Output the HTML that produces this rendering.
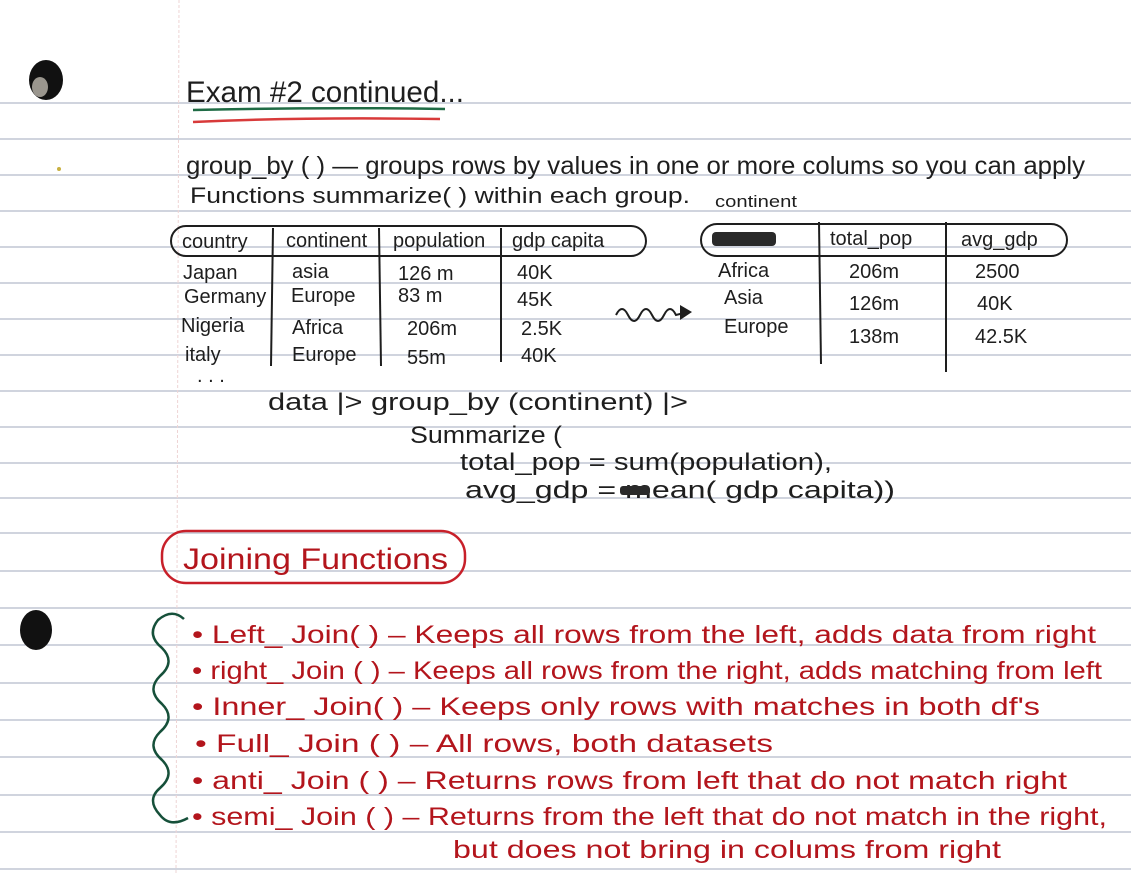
<!DOCTYPE html>
<html><head><meta charset="utf-8"><style>
html,body{margin:0;padding:0;background:#fff;}
svg{display:block}
text{font-family:"Liberation Sans",sans-serif;}
.k{fill:#1e1e1e}
.r{fill:#b3151c}
</style></head><body>
<svg width="1131" height="873" viewBox="0 0 1131 873" xmlns="http://www.w3.org/2000/svg">
<rect width="1131" height="873" fill="#fff"/>
<g stroke="#b4bbc9" stroke-width="1.2">
<line x1="0" y1="103" x2="1131" y2="103"/>
<line x1="0" y1="139" x2="1131" y2="139"/>
<line x1="0" y1="175" x2="1131" y2="175"/>
<line x1="0" y1="211" x2="1131" y2="211"/>
<line x1="0" y1="247" x2="1131" y2="247"/>
<line x1="0" y1="283" x2="1131" y2="283"/>
<line x1="0" y1="319" x2="1131" y2="319"/>
<line x1="0" y1="355" x2="1131" y2="355"/>
<line x1="0" y1="391" x2="1131" y2="391"/>
<line x1="0" y1="427" x2="1131" y2="427"/>
<line x1="0" y1="463" x2="1131" y2="463"/>
<line x1="0" y1="498" x2="1131" y2="498"/>
<line x1="0" y1="533" x2="1131" y2="533"/>
<line x1="0" y1="571" x2="1131" y2="571"/>
<line x1="0" y1="608" x2="1131" y2="608"/>
<line x1="0" y1="645" x2="1131" y2="645"/>
<line x1="0" y1="683" x2="1131" y2="683"/>
<line x1="0" y1="720" x2="1131" y2="720"/>
<line x1="0" y1="757" x2="1131" y2="757"/>
<line x1="0" y1="795" x2="1131" y2="795"/>
<line x1="0" y1="832" x2="1131" y2="832"/>
<line x1="0" y1="869" x2="1131" y2="869"/>
</g>
<line x1="179" y1="0" x2="176" y2="873" stroke="#eed4d4" stroke-width="1" stroke-dasharray="3 2"/>
<ellipse cx="46" cy="80" rx="17" ry="20" fill="#111"/>
<ellipse cx="40" cy="87" rx="8" ry="10" fill="#9a968e"/>
<ellipse cx="36" cy="630" rx="16" ry="20" fill="#111"/>
<circle cx="59" cy="169" r="2" fill="#c8b040"/>

<g lengthAdjust="spacingAndGlyphs">
<text class="k" x="186" y="102" font-size="30" textLength="278" lengthAdjust="spacingAndGlyphs">Exam #2 continued...</text>
<text class="k" x="186" y="174" font-size="25" textLength="899" lengthAdjust="spacingAndGlyphs">group_by ( ) — groups rows by values in one or more colums so you can apply</text>
<text class="k" x="190" y="203" font-size="22" textLength="500" lengthAdjust="spacingAndGlyphs">Functions summarize( ) within each group.</text>
<text class="k" x="715" y="207" font-size="17" textLength="82" lengthAdjust="spacingAndGlyphs">continent</text>
<text class="k" x="268" y="410" font-size="24" textLength="420" lengthAdjust="spacingAndGlyphs">data |&gt; group_by (continent) |&gt;</text>
<text class="k" x="410" y="443" font-size="24" textLength="152" lengthAdjust="spacingAndGlyphs">Summarize (</text>
<text class="k" x="460" y="470" font-size="24" textLength="372" lengthAdjust="spacingAndGlyphs">total_pop = sum(population),</text>
<text class="k" x="465" y="498" font-size="24" textLength="430" lengthAdjust="spacingAndGlyphs">avg_gdp = mean(     gdp capita))</text>
</g>
<path d="M193 110 Q320 107 445 109" stroke="#1f6b45" stroke-width="2.5" fill="none"/>
<path d="M193 122 Q300 117 440 119" stroke="#d83a3a" stroke-width="2.5" fill="none"/>

<g stroke="#1e1e1e" stroke-width="2" fill="none">
<rect x="171" y="226" width="475" height="30" rx="15"/>
<line x1="273" y1="228" x2="271" y2="366"/>
<line x1="379" y1="228" x2="381" y2="366"/>
<line x1="501" y1="228" x2="501" y2="362"/>
<rect x="701" y="224" width="366" height="32" rx="16"/>
<line x1="819" y1="222" x2="821" y2="364"/>
<line x1="946" y1="222" x2="946" y2="372"/>
<path d="M616 315 q6 -12 12 0 q6 12 12 0 q6 -12 12 0 q6 12 12 0 q6 -12 12 0 l8 -2"/>
</g>
<path d="M680 305 L692 312 L680 320 Z" fill="#1e1e1e"/>
<rect x="712" y="232" width="64" height="14" rx="4" fill="#2a2a2a"/>
<rect x="620" y="486" width="30" height="9" rx="3" fill="#2a2a2a"/>

<g class="k" font-size="20">
<text x="182" y="248">country</text>
<text x="286" y="247">continent</text>
<text x="393" y="247">population</text>
<text x="512" y="247">gdp capita</text>
<text x="830" y="245">total_pop</text>
<text x="961" y="246">avg_gdp</text>
<text x="183" y="279">Japan</text>
<text x="292" y="278">asia</text>
<text x="398" y="280">126 m</text>
<text x="517" y="279">40K</text>
<text x="184" y="303">Germany</text>
<text x="291" y="302">Europe</text>
<text x="398" y="302">83 m</text>
<text x="517" y="306">45K</text>
<text x="181" y="332">Nigeria</text>
<text x="292" y="334">Africa</text>
<text x="407" y="335">206m</text>
<text x="521" y="335">2.5K</text>
<text x="185" y="361">italy</text>
<text x="292" y="361">Europe</text>
<text x="407" y="364">55m</text>
<text x="521" y="362">40K</text>
<text x="197" y="382">. . .</text>
<text x="718" y="277">Africa</text>
<text x="724" y="304">Asia</text>
<text x="724" y="333">Europe</text>
<text x="849" y="278">206m</text>
<text x="849" y="310">126m</text>
<text x="849" y="343">138m</text>
<text x="975" y="278">2500</text>
<text x="977" y="310">40K</text>
<text x="975" y="343">42.5K</text>
</g>

<rect x="162" y="531" width="303" height="52" rx="24" fill="none" stroke="#c8202a" stroke-width="2.5"/>
<text class="r" x="183" y="569" font-size="30" textLength="265" lengthAdjust="spacingAndGlyphs">Joining Functions</text>

<path d="M184 619 Q172 608 158 620 Q146 635 162 648 Q176 662 160 676 Q146 690 162 704 Q176 718 160 732 Q146 746 162 760 Q176 774 160 788 Q146 800 160 815 Q170 828 188 818" stroke="#16503a" stroke-width="2.5" fill="none"/>

<g class="r" font-size="25">
<text x="192" y="643" textLength="904" lengthAdjust="spacingAndGlyphs">• Left_ Join( ) – Keeps all rows from the left, adds data from right</text>
<text x="192" y="679" textLength="910" lengthAdjust="spacingAndGlyphs">• right_ Join ( ) – Keeps all rows from the right, adds matching from left</text>
<text x="192" y="715" textLength="848" lengthAdjust="spacingAndGlyphs">• Inner_ Join( ) – Keeps only rows with matches in both df's</text>
<text x="195" y="752" textLength="578" lengthAdjust="spacingAndGlyphs">•  Full_ Join ( ) – All rows, both datasets</text>
<text x="192" y="789" textLength="875" lengthAdjust="spacingAndGlyphs">• anti_ Join ( ) – Returns rows from left that do not match right</text>
<text x="192" y="825" textLength="915" lengthAdjust="spacingAndGlyphs">• semi_ Join ( ) – Returns from the left that do not match in the right,</text>
<text x="453" y="858" textLength="548" lengthAdjust="spacingAndGlyphs">but does not bring in colums from right</text>
</g>
</svg>
</body></html>
